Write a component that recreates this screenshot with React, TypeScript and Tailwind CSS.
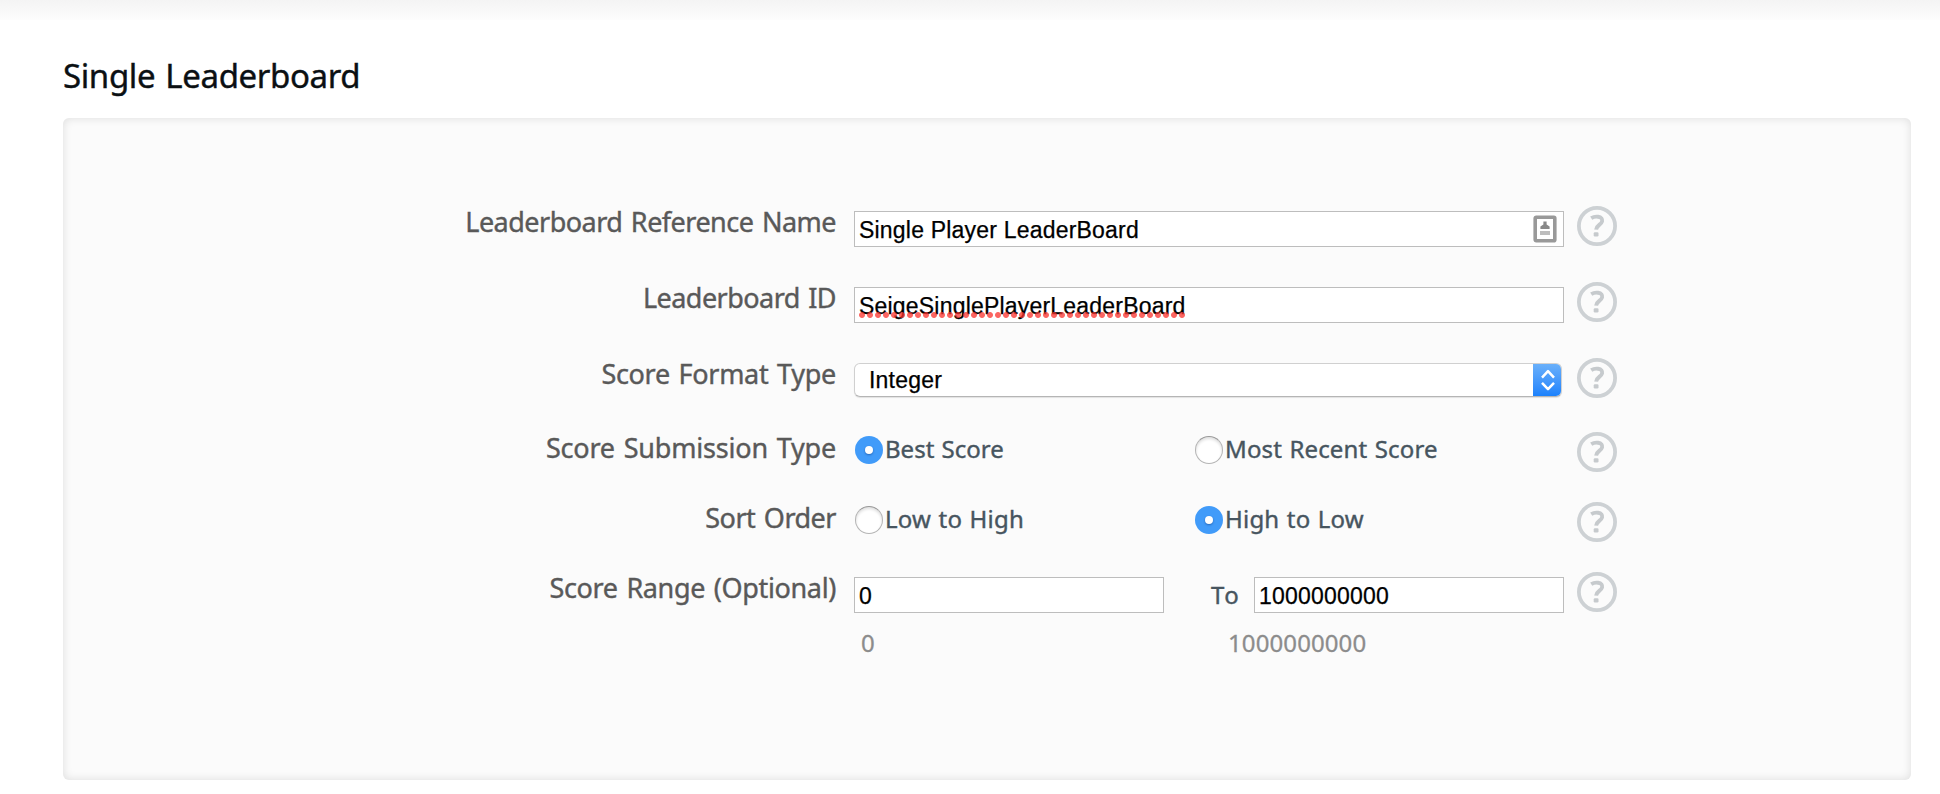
import type { ReactNode } from "react";

function HelpIcon() {
  return (
    <svg className="h-10 w-10 shrink-0" viewBox="0 0 40 40" fill="none" aria-label="Help">
      <circle cx="20" cy="20" r="18.1" stroke="#cdd1d4" strokeWidth="3.8" />
      <path
        d="M14.2 12.2 C16.4 10.8 19 10.4 21 10.7 C24.4 11.2 25.6 13.2 25.1 15.4 C24.4 18.6 19.6 19 19.1 23.6"
        stroke="#c6cacd"
        strokeWidth="3.9"
      />
      <rect x="16.7" y="26.2" width="4.8" height="4.2" rx="1.2" fill="#c6cacd" />
    </svg>
  );
}

function ContactIcon() {
  return (
    <svg className="h-[28px] w-[24px]" viewBox="0 0 24 28" fill="none">
      <rect x="2.2" y="2.2" width="19.6" height="23.6" rx="1" stroke="#999" strokeWidth="3.6" />
      <path d="M10.4 6.5h3.2v3l3 2v2.5H7.4v-2.5l3-2z" fill="#888" />
      <rect x="7" y="16" width="10" height="4" fill="#bdbdbd" />
    </svg>
  );
}

function Row({ label, spacing, height, children }: { label: string; spacing: string; height: string; children: ReactNode }) {
  return (
    <div className={`flex items-start ${height}`}>
      <div
        className={`w-[773px] shrink-0 whitespace-nowrap text-right text-[27px] leading-8 text-[#595959] [-webkit-text-stroke:0.4px_#595959] [word-spacing:2px] ${spacing}`}
      >
        {label}
      </div>
      <div className="ml-[18px] w-[710px] shrink-0">{children}</div>
      <div className="ml-[13px]">
        <HelpIcon />
      </div>
    </div>
  );
}

const inputText = "font-['Liberation_Sans',sans-serif] text-[23px] tracking-[0.2px] text-black [-webkit-text-stroke:0.25px_#000]";

function TextBox({ value, width, children }: { value: string; width: string; children?: ReactNode }) {
  return (
    <div className={`relative mt-[5px] flex h-9 items-center border border-[#bdbdbd] bg-white ${width}`}>
      <input
        className={`h-[34px] w-full bg-transparent pl-1 pt-[2px] outline-none ${inputText}`}
        defaultValue={value}
        spellCheck={false}
      />
      {children}
    </div>
  );
}

function Radio({ label, checked, spacing, width }: { label: string; checked?: boolean; spacing: string; width: string }) {
  return (
    <label className={`flex items-start ${width}`}>
      {checked ? (
        <span className="flex h-7 w-7 shrink-0 items-center justify-center rounded-full bg-[#419bf9]">
          <span className="h-2 w-2 rounded-full bg-white shadow-[0_1px_2px_rgba(0,40,110,0.45)]" />
        </span>
      ) : (
        <span className="h-7 w-7 shrink-0 rounded-full border border-[#b4b4b4] border-t-[#999] bg-white shadow-[inset_0_2px_3px_rgba(0,0,0,0.13)]" />
      )}
      <span
        className={`ml-[2px] whitespace-nowrap text-[24px] leading-[26px] text-[#47555f] [-webkit-text-stroke:0.4px_#47555f] [word-spacing:1px] ${spacing}`}
      >
        {label}
      </span>
    </label>
  );
}

export default function App() {
  return (
    <div className="h-[794px] w-[1940px] overflow-hidden bg-white font-['Noto_Sans',sans-serif]">
      <div className="h-5 bg-linear-to-b from-[#f4f4f4] to-[#fdfdfd]" />
      <h1 className="ml-[63px] mt-9 h-[62px] whitespace-nowrap text-[33px] leading-[40px] tracking-[-0.38px] text-[#0b1013] [-webkit-text-stroke:0.4px_#0b1013] [word-spacing:2px]">
        Single Leaderboard
      </h1>
      <section className="ml-[63px] h-[662px] w-[1848px] rounded-md bg-[#fbfbfb] pt-[88px] shadow-[inset_0_0_10px_rgba(0,0,0,0.12)]">
        <Row label="Leaderboard Reference Name" spacing="tracking-[-0.52px]" height="h-[76px]">
          <TextBox value="Single Player LeaderBoard" width="w-[710px]">
            <span className="mr-[6px] shrink-0">
              <ContactIcon />
            </span>
          </TextBox>
        </Row>
        <Row label="Leaderboard ID" spacing="tracking-[-0.55px]" height="h-[76px]">
          <TextBox value="SeigeSinglePlayerLeaderBoard" width="w-[710px]">
            <span className="absolute left-1 top-[24px] h-[6px] w-[326px] bg-[radial-gradient(circle_at_3px_3px,rgba(250,50,45,0.75)_2.5px,transparent_3.4px)] bg-[length:8px_6px]" />
          </TextBox>
        </Row>
        <Row label="Score Format Type" spacing="tracking-[-0.3px]" height="h-[74px]">
          <div className="mt-[5px] flex h-[34px] w-[708px] overflow-hidden rounded-[6px] border border-[#d0d0d0] border-b-[#b5b5b5] bg-white shadow-[0_1px_1px_rgba(0,0,0,0.1)]">
            <span className={`flex-1 pl-[14px] leading-[33px] ${inputText}`}>Integer</span>
            <span className="-my-px -mr-px flex h-[34px] w-[29px] items-center justify-center bg-linear-to-b from-[#6bb1fa] to-[#1680fc]">
              <svg className="h-[22px] w-[14px]" viewBox="0 0 14 22" fill="none" stroke="#fff" strokeWidth="2.5">
                <path d="M1 8.6 7 2.2l6 6.4M1 13.8l6 6.4 6-6.4" strokeLinejoin="round" />
              </svg>
            </span>
          </div>
        </Row>
        <Row label="Score Submission Type" spacing="tracking-[-0.2px]" height="h-[70px]">
          <div className="flex pl-px pt-1">
            <Radio label="Best Score" checked spacing="tracking-[0px]" width="w-[340px]" />
            <Radio label="Most Recent Score" spacing="tracking-[0.15px]" width="w-[340px]" />
          </div>
        </Row>
        <Row label="Sort Order" spacing="tracking-[-0.5px]" height="h-[70px]">
          <div className="flex pl-px pt-1">
            <Radio label="Low to High" spacing="tracking-[0.2px]" width="w-[340px]" />
            <Radio label="High to Low" checked spacing="tracking-[0.2px]" width="w-[340px]" />
          </div>
        </Row>
        <Row label="Score Range (Optional)" spacing="tracking-[-0.35px]" height="h-[52px]">
          <div className="flex">
            <TextBox value="0" width="w-[310px]" />
            <span className="mt-[7px] w-[90px] pl-[47px] text-[24px] leading-8 tracking-[1.5px] text-[#47555f] [-webkit-text-stroke:0.4px_#47555f]">
              To
            </span>
            <TextBox value="1000000000" width="w-[310px]" />
          </div>
        </Row>
        <div className="flex pl-[798px] text-[24px] leading-[38px] tracking-[0.1px] text-[#8c8c8c] [-webkit-text-stroke:0.3px_#8c8c8c]">
          <span className="w-[367px]">0</span>
          <span>1000000000</span>
        </div>
      </section>
    </div>
  );
}
